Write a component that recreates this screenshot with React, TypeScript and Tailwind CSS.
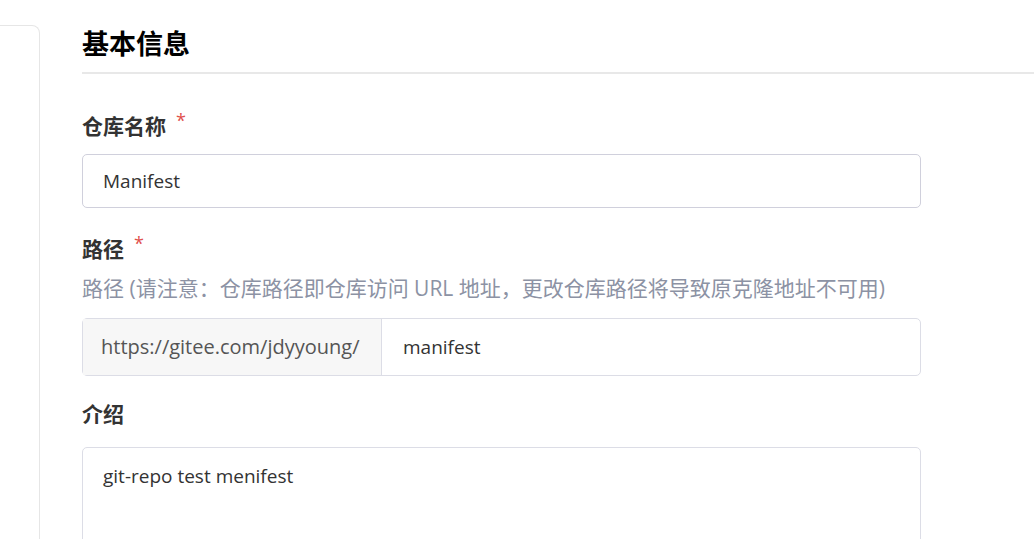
function Label({ text, required }: { text: string; required?: boolean }) {
  return (
    <div className="flex items-start text-[21px] font-bold leading-[28px] text-[#333]">
      {text}
      {required && <span className="ml-[10px] -mt-[6px] text-[18px] font-normal text-[#e0504c]">*</span>}
    </div>
  );
}

export default function App() {
  return (
    <div
      className="flex h-[539px] w-[1034px] overflow-hidden bg-white"
      style={{ fontFamily: '"Open Sans", "Noto Sans CJK SC", sans-serif' }}
    >
      <div className="mt-[25px] h-[600px] w-[40px] shrink-0 rounded-tr-[8px] border border-l-0 border-[#e6e6e6]" />
      <div className="ml-[42px] flex flex-1 flex-col pt-[26px]">
        <div className="border-b-2 border-[#e8e8e8] pb-[12px]">
          <h1 className="text-[27px] font-bold leading-[34px] text-black" style={{ fontFamily: '"Noto Sans CJK SC", sans-serif' }}>
            基本信息
          </h1>
        </div>
        <div className="w-[839px]">
          <div className="mt-[38px]">
            <Label text="仓库名称" required />
          </div>
          <div className="mt-[14px] flex h-[54px] items-center rounded-[5px] border border-[#d0d0dc] px-[20px] text-[19px] text-[#333]">
            Manifest
          </div>
          <div className="mt-[27px]">
            <Label text="路径" required />
          </div>
          <div className="mt-[10px] text-[21px] leading-[30px] text-[#8c92a4]">
            路径 (请注意：仓库路径即仓库访问 URL 地址，更改仓库路径将导致原克隆地址不可用)
          </div>
          <div className="mt-[15px] flex h-[58px] rounded-[5px] border border-[#dcdde6] text-[19px]">
            <div className="flex w-[299px] items-center border-r border-[#dcdde6] bg-[#f7f7f7] pl-[18px] text-[20px] text-[#555]">
              https://gitee.com/jdyyoung/
            </div>
            <div className="flex items-center pl-[21px] text-[#333]">manifest</div>
          </div>
          <div className="mt-[24px]">
            <Label text="介绍" />
          </div>
          <div className="mt-[19px] h-[120px] rounded-[5px] border border-[#dcdde6] px-[20px] pt-[14px] text-[19px] text-[#333]">
            git-repo test menifest
          </div>
        </div>
      </div>
    </div>
  );
}
